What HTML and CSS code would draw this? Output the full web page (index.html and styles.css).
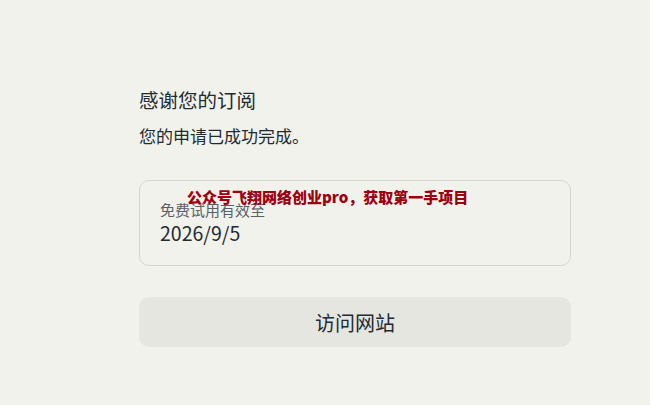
FILE: index.html
```html
<!DOCTYPE html>
<html lang="zh-CN">

<head>
    <meta charset="UTF-8" />
    <meta name="viewport" content="width=device-width, initial-scale=1.0" />
    <title>订阅成功</title>
    <link rel="stylesheet" href="styles.css">
</head>

<body>
    <main class="page">
        <h1 class="title">感谢您的订阅</h1>
        <p class="subtitle">您的申请已成功完成。</p>

        <div class="trial-card">
            <span class="watermark">公众号飞翔网络创业pro，获取第一手项目</span>
            <div class="trial-label">免费试用有效至</div>
            <div class="trial-date">2026/9/5</div>
        </div>

        <button class="visit-btn" type="button">访问网站</button>
    </main>
</body>

</html>
```

FILE: styles.css
```css
html,
body {
    margin: 0;
    background-color: #f2f2ed;
    font-family: "Noto Sans CJK SC", "Liberation Sans", sans-serif;
    color: #222b30;
}

.page {
    width: 432px;
    margin-left: 139px;
    padding-top: 88px;
    display: flex;
    flex-direction: column;
}

.title {
    margin: 0;
    font-size: 19.5px;
    font-weight: 400;
    line-height: 24px;
}

.subtitle {
    margin: 12px 0 0;
    font-size: 17px;
    line-height: 24px;
}

.trial-card {
    position: relative;
    margin-top: 32px;
    height: 86px;
    box-sizing: border-box;
    padding: 19px 20px 0;
    border: 1px solid #d6d6d1;
    border-radius: 10px;
}

.watermark {
    position: absolute;
    left: 47px;
    top: 6px;
    font-size: 15px;
    font-weight: 900;
    line-height: 20px;
    color: #a0000e;
    white-space: nowrap;
}

.trial-label {
    font-size: 15px;
    line-height: 20px;
    color: #596066;
}

.trial-date {
    margin-top: 1px;
    font-size: 19.5px;
    line-height: 24px;
}

.visit-btn {
    margin-top: 31px;
    height: 50px;
    border: none;
    border-radius: 10px;
    background-color: #e6e6e1;
    font-family: inherit;
    font-size: 20px;
    color: #222b30;
    cursor: pointer;
}
```
